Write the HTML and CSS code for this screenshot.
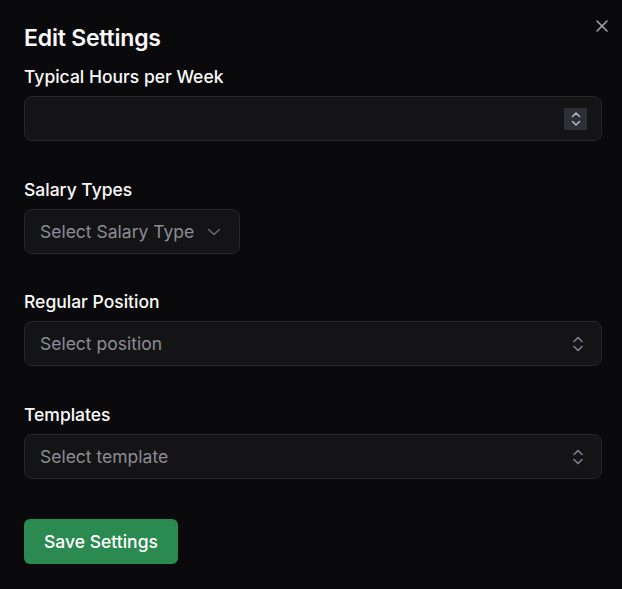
FILE: index.html
```html
<!DOCTYPE html>
<html>
<head>
<meta charset="utf-8">
<link rel="stylesheet" href="styles.css">
</head>
<body>
<div class="dialog">
  <button class="close" aria-label="Close">
    <svg width="12" height="12" viewBox="0 0 12 12"><path d="M1 1L11 11M11 1L1 11" stroke="#a8a8ae" stroke-width="1.5" stroke-linecap="round"/></svg>
  </button>
  <h2 class="title">Edit Settings</h2>
  <div class="field first">
    <label class="label">Typical Hours per Week</label>
    <div class="input">
      <span class="spin">
        <svg width="12" height="18" viewBox="0 0 12 18"><path d="M2.5 6.5L6 3L9.5 6.5M2.5 11.5L6 15L9.5 11.5" fill="none" stroke="#b4b4bc" stroke-width="1.6" stroke-linecap="round" stroke-linejoin="round"/></svg>
      </span>
    </div>
  </div>
  <div class="field">
    <label class="label">Salary Types</label>
    <div class="select inline">
      <span class="ph">Select Salary Type</span>
      <svg class="chev" width="14" height="8" viewBox="0 0 14 8"><path d="M1.5 1.5L7 6.5L12.5 1.5" fill="none" stroke="#6c6c74" stroke-width="1.3" stroke-linecap="round" stroke-linejoin="round"/></svg>
    </div>
  </div>
  <div class="field tight">
    <label class="label">Regular Position</label>
    <div class="select">
      <span class="ph">Select position</span>
      <svg class="updown" width="14" height="20" viewBox="0 0 14 20"><path d="M3 7.5L7 3.5L11 7.5M3 12.5L7 16.5L11 12.5" fill="none" stroke="#80808a" stroke-width="1.6" stroke-linecap="round" stroke-linejoin="round"/></svg>
    </div>
  </div>
  <div class="field">
    <label class="label">Templates</label>
    <div class="select">
      <span class="ph">Select template</span>
      <svg class="updown" width="14" height="20" viewBox="0 0 14 20"><path d="M3 7.5L7 3.5L11 7.5M3 12.5L7 16.5L11 12.5" fill="none" stroke="#80808a" stroke-width="1.6" stroke-linecap="round" stroke-linejoin="round"/></svg>
    </div>
  </div>
  <button class="save">Save Settings</button>
</div>
</body>
</html>
```
FILE: styles.css
```css
html, body {
  margin: 0;
  padding: 0;
  background: #0a0a0c;
  font-family: Inter, "Noto Sans", sans-serif;
  color: #fafafa;
}
.dialog {
  position: relative;
  width: 622px;
  height: 589px;
  box-sizing: border-box;
  padding: 24px 20px 0 24px;
  display: flex;
  flex-direction: column;
}
.close {
  position: absolute;
  top: 20px;
  right: 14px;
  background: none;
  border: none;
  padding: 0;
  width: 12px;
  height: 12px;
  display: flex;
}
.title {
  margin: 0;
  font-size: 23px;
  line-height: 28px;
  font-weight: 600;
  letter-spacing: -0.2px;
}
.field {
  display: flex;
  flex-direction: column;
  gap: 7px;
  margin-top: 37px;
}
.field.first {
  margin-top: 13px;
}
.field.tight {
  margin-top: 36px;
}
.label {
  font-size: 17.5px;
  line-height: 24px;
  font-weight: 500;
}
.input, .select {
  height: 45px;
  box-sizing: border-box;
  border: 1px solid #27272b;
  border-radius: 8px;
  background: #141416;
  display: flex;
  align-items: center;
}
.input {
  justify-content: flex-end;
  padding-right: 14px;
}
.spin {
  width: 23px;
  height: 22px;
  background: #2e2e36;
  display: flex;
  align-items: center;
  justify-content: center;
}
.select {
  padding: 0 16px 0 15px;
  justify-content: space-between;
}
.select.inline {
  align-self: flex-start;
  width: 216px;
  padding-right: 18px;
}
.ph {
  font-size: 17.5px;
  color: #8c8c94;
  font-weight: 400;
}
.save {
  margin-top: 40px;
  align-self: flex-start;
  width: 154px;
  height: 45px;
  border: none;
  border-radius: 6px;
  background: #2b8a4f;
  color: #ffffff;
  font-family: Inter, "Noto Sans", sans-serif;
  font-size: 17.5px;
  font-weight: 500;
}
```
